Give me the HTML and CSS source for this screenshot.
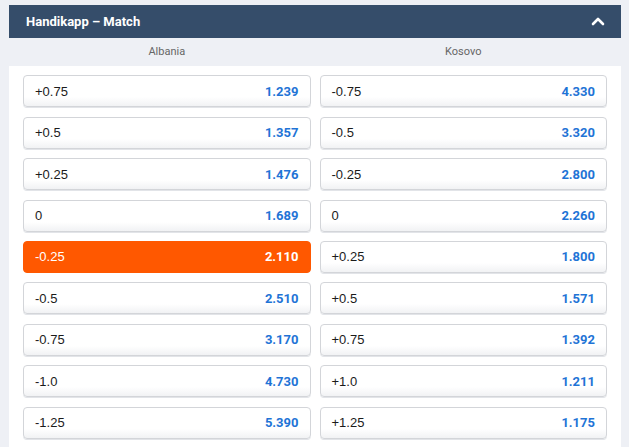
FILE: index.html
```html
<!DOCTYPE html>
<html>
<head>
<meta charset="utf-8">
<link rel="stylesheet" href="styles.css">
</head>
<body>
<div class="market">
  <div class="market-header">
    <span class="market-title">Handikapp – Match</span>
    <svg class="chevron" width="14" height="10" viewBox="0 0 14 10"><path d="M2 8 L7 3 L12 8" fill="none" stroke="#fff" stroke-width="2.6" stroke-linecap="round" stroke-linejoin="round"/></svg>
  </div>
  <div class="labels">
    <div class="label">Albania</div>
    <div class="label">Kosovo</div>
  </div>
  <div class="grid">
    <div class="col">
      <div class="btn"><span class="hc">+0.75</span><span class="odds">1.239</span></div>
      <div class="btn"><span class="hc">+0.5</span><span class="odds">1.357</span></div>
      <div class="btn"><span class="hc">+0.25</span><span class="odds">1.476</span></div>
      <div class="btn"><span class="hc">0</span><span class="odds">1.689</span></div>
      <div class="btn selected"><span class="hc">-0.25</span><span class="odds">2.110</span></div>
      <div class="btn"><span class="hc">-0.5</span><span class="odds">2.510</span></div>
      <div class="btn"><span class="hc">-0.75</span><span class="odds">3.170</span></div>
      <div class="btn"><span class="hc">-1.0</span><span class="odds">4.730</span></div>
      <div class="btn"><span class="hc">-1.25</span><span class="odds">5.390</span></div>
    </div>
    <div class="col">
      <div class="btn"><span class="hc">-0.75</span><span class="odds">4.330</span></div>
      <div class="btn"><span class="hc">-0.5</span><span class="odds">3.320</span></div>
      <div class="btn"><span class="hc">-0.25</span><span class="odds">2.800</span></div>
      <div class="btn"><span class="hc">0</span><span class="odds">2.260</span></div>
      <div class="btn"><span class="hc">+0.25</span><span class="odds">1.800</span></div>
      <div class="btn"><span class="hc">+0.5</span><span class="odds">1.571</span></div>
      <div class="btn"><span class="hc">+0.75</span><span class="odds">1.392</span></div>
      <div class="btn"><span class="hc">+1.0</span><span class="odds">1.211</span></div>
      <div class="btn"><span class="hc">+1.25</span><span class="odds">1.175</span></div>
    </div>
  </div>
</div>
</body>
</html>
```
FILE: styles.css
```css
html, body {
  margin: 0;
  padding: 0;
  background: #eef0f5;
  font-family: Roboto, "Liberation Sans", Arial, sans-serif;
}
body {
  padding: 5px 8px 0 9px;
  height: 447px;
  box-sizing: border-box;
  overflow: hidden;
}
.market {
  width: 612px;
}
.market-header {
  height: 33px;
  background: #354d6a;
  display: flex;
  align-items: center;
  justify-content: space-between;
  padding: 0 16px 0 17px;
}
.market-title {
  color: #fff;
  font-weight: bold;
  font-size: 13px;
}
.chevron {
  display: block;
  margin-top: -1px;
}
.labels {
  height: 28px;
  display: grid;
  grid-template-columns: 1fr 1fr;
  column-gap: 9px;
  padding: 0 14px;
  align-items: center;
}
.label {
  text-align: center;
  font-size: 11px;
  color: #666;
  margin-top: -2px;
}
.grid {
  background: #fff;
  display: grid;
  grid-template-columns: 1fr 1fr;
  column-gap: 9px;
  padding: 9.4px 14px 20px;
}
.col {
  display: flex;
  flex-direction: column;
  gap: 9.4px;
}
.btn {
  height: 32px;
  box-sizing: border-box;
  border: 1px solid #d3d5d9;
  border-radius: 4px;
  background: linear-gradient(#fff 0%, #fff 70%, #f1f2f4 100%);
  box-shadow: 0 1px 0 #e2e4e8;
  display: flex;
  align-items: center;
  justify-content: space-between;
  padding: 0 11px;
  font-size: 13px;
}
.hc {
  color: #1b1b1b;
  font-family: "Liberation Sans", Arial, sans-serif;
}
.odds {
  color: #1f74d6;
  font-weight: bold;
}
.btn.selected {
  background: #ff5800;
  border-color: #ff5800;
  box-shadow: none;
}
.btn.selected .hc,
.btn.selected .odds {
  color: #fff;
}
```
